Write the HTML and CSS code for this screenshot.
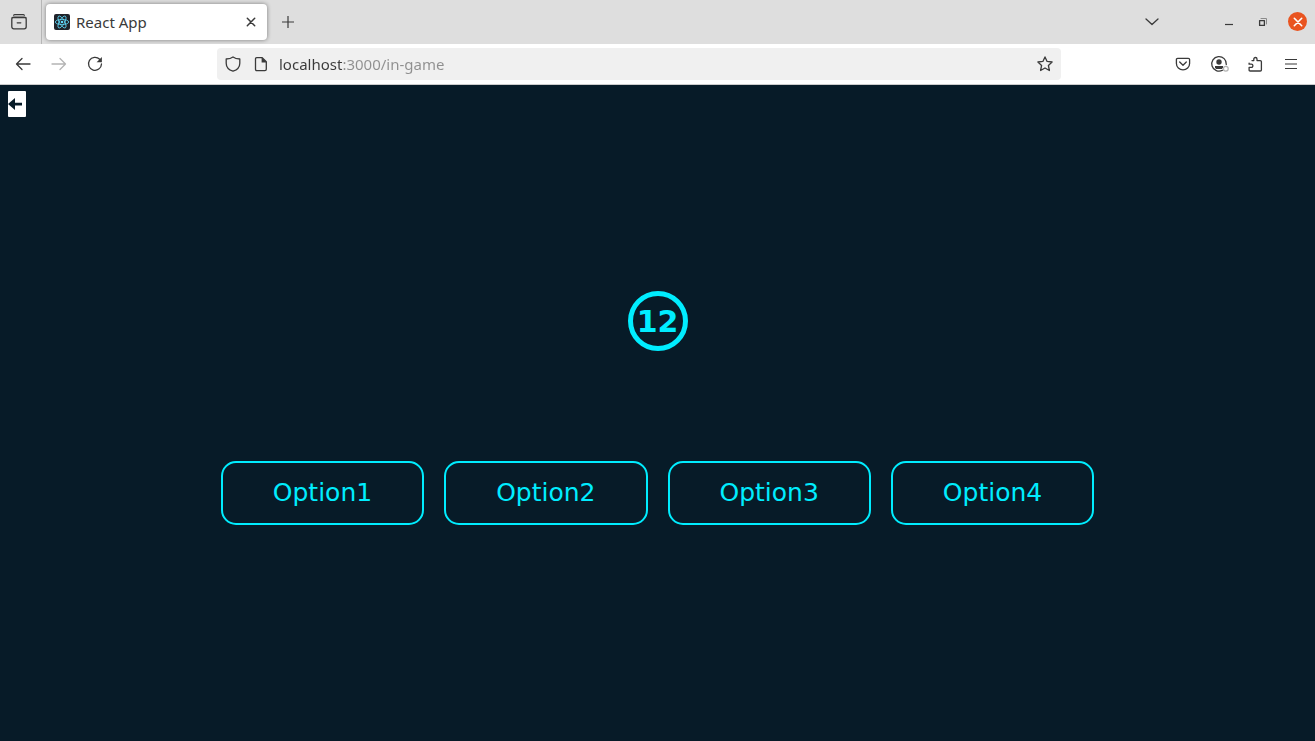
FILE: index.html
```html
<!DOCTYPE html>
<html lang="en">
<head>
<meta charset="utf-8">
<meta name="viewport" content="width=device-width, initial-scale=1">
<title>React App</title>
<link rel="stylesheet" href="styles.css">
</head>
<body>
<header class="tabbar">
  <button class="view-button" aria-label="View recent browsing">
    <svg class="icon" viewBox="0 0 16 16"><path d="M2.7 1.2Q3 .6 3.8.6h8.4q.8 0 1.1.6"/><rect x=".8" y="3.2" width="14.4" height="11.6" rx="2"/><path d="M1.2 3.7h13.6M6.2 8.8h3.6"/></svg>
  </button>
  <div class="tab">
    <svg class="favicon" viewBox="0 0 16 16"><rect width="16" height="16" rx="2" fill="#20232a"/><g fill="none" stroke="#61dafb" stroke-width=".8"><ellipse cx="8" cy="8" rx="6.7" ry="2.6"/><ellipse cx="8" cy="8" rx="6.7" ry="2.6" transform="rotate(60 8 8)"/><ellipse cx="8" cy="8" rx="6.7" ry="2.6" transform="rotate(120 8 8)"/></g><circle cx="8" cy="8" r="1.3" fill="#61dafb"/></svg>
    <span class="tab-title">React App</span>
    <button class="tab-close" aria-label="Close tab"><svg class="icon" viewBox="0 0 16 16"><path d="M4.3 4.3l7.4 7.4M11.7 4.3l-7.4 7.4"/></svg></button>
  </div>
  <button class="new-tab" aria-label="New tab"><svg class="icon" viewBox="0 0 16 16"><path class="thin" d="M8 2v12M2 8h12"/></svg></button>
  <button class="list-tabs" aria-label="List all tabs"><svg class="icon" viewBox="0 0 16 16"><path d="M2 5l6 5.600 6-5.600"/></svg></button>
  <div class="window-controls">
    <button aria-label="Minimize"><svg class="icon" viewBox="0 0 16 16"><path class="thin" d="M4 10.500h8"/></svg></button>
    <button aria-label="Restore"><svg class="icon" viewBox="0 0 16 16"><path class="faint" d="M6 4.500h5.500V10"/><path d="M4.600 6.600h4.800v4.800H4.600z"/></svg></button>
    <button class="window-close" aria-label="Close window"><svg class="icon" viewBox="0 0 16 16"><path d="M4.300 4.300l7.400 7.400M11.700 4.300l-7.400 7.400"/></svg></button>
  </div>
</header>

<nav class="toolbar" aria-label="Navigation">
  <div class="tools">
    <button aria-label="Back"><svg class="icon" viewBox="0 0 16 16"><path d="M15 8H1.500M7 2.500L1.500 8 7 13.500"/></svg></button>
    <button aria-label="Forward" disabled><svg class="icon" viewBox="0 0 16 16"><path d="M1 8h13.500M9 2.500L14.500 8 9 13.500"/></svg></button>
    <button aria-label="Reload"><svg class="icon" viewBox="0 0 16 16"><path d="M12.700 3.300A6.500 6.500 0 1 0 14.500 8"/><path class="solid" d="M14.900 1v5.300H9.600z"/></svg></button>
  </div>
  <div class="urlbar">
    <svg class="icon" viewBox="0 0 16 16"><path d="M8 .9C6 2.400 3.600 2.900 1.200 3v4.200c0 3.500 2.600 6.600 6.800 8 4.200-1.400 6.800-4.500 6.800-8V3C12.400 2.900 10 2.400 8 .9z"/></svg>
    <svg class="icon" viewBox="0 0 16 16"><path d="M3.800 1.700h5.400l4.100 4.100v7.400q0 1.400-1.400 1.400H3.800q-1.300 0-1.300-1.400V3q0-1.300 1.300-1.300z"/><path class="solid" d="M8.600 1.200l5.300 5.300H8.600z"/></svg>
    <input class="address" type="text" value="localhost:3000/in-game" aria-label="Address" spellcheck="false">
    <button aria-label="Bookmark this page"><svg class="icon" viewBox="0 0 16 16"><path d="M8 .9l2.100 4.500 5 .6-3.700 3.500 1 5L8 12l-4.400 2.500 1-5L.9 6l5-.6z"/></svg></button>
  </div>
  <div class="tools">
    <button aria-label="Save to Pocket"><svg class="icon" viewBox="0 0 16 16"><path d="M2.700 2.300h10.600q1.300 0 1.300 1.300v3.800a6.600 6.400 0 0 1-13.200 0V3.600q0-1.300 1.300-1.300z"/><path d="M4.700 6L8 9.200 11.300 6"/></svg></button>
    <button aria-label="Account"><svg class="icon account-icon" viewBox="0 0 20 16"><path d="M15.300 8.500A7.300 7.300 0 1 0 11.500 14.300"/><circle class="solid" cx="8" cy="6" r="2.700"/><path class="solid" d="M4 10h8v1.500l-1 1.500H5l-1-1.500z"/><circle class="status" cx="14.800" cy="12.800" r="2.400"/></svg></button>
    <button aria-label="Extensions"><svg class="icon" viewBox="0 0 16 16"><path d="M5 4.600h1.800V3.100a1.600 1.600 0 0 1 3.200 0v1.500h3.300q1.100 0 1.100 1.100v8.200q0 1.100-1.100 1.100H3.200q-1.100 0-1.100-1.100v-2.500h2.200a1.600 1.600 0 0 0 0-3.200H2.100V7.100"/></svg></button>
    <button aria-label="Open application menu"><svg class="icon" viewBox="0 0 16 16"><path class="thin" d="M2 3.500h12M2 8h12M2 12.500h12"/></svg></button>
  </div>
</nav>

<main class="game">
  <div class="game-header">
    <button class="leave" aria-label="Leave game"><svg class="arrow" viewBox="0 0 18 25"><path d="M0 12.500l7-6v4.800h7v2.800H7v4.400z"/></svg></button>
  </div>
  <div class="board">
    <div class="timer" role="timer">12</div>
    <div class="options">
      <button class="option">Option1</button>
      <button class="option">Option2</button>
      <button class="option">Option3</button>
      <button class="option">Option4</button>
    </div>
  </div>
</main>
</body>
</html>
```
FILE: styles.css
```css
* {
  box-sizing: border-box;
}

body {
  margin: 0;
  min-height: 100vh;
  display: flex;
  flex-direction: column;
  font-family: "Noto Sans", "Open Sans", sans-serif;
  font-size: 15px;
  color: #3a3a3a;
}

button {
  display: flex;
  align-items: center;
  justify-content: center;
  margin: 0;
  padding: 0;
  border: 0;
  background: none;
  color: inherit;
  font: inherit;
}

.icon {
  display: block;
  flex: none;
  width: 16px;
  height: 16px;
  overflow: visible;
  fill: none;
  stroke: currentColor;
  stroke-width: 1.3;
  stroke-linejoin: round;
  stroke-linecap: round;
}

.icon .thin {
  stroke-width: 1.2;
  stroke-linecap: butt;
}

.icon .solid {
  fill: currentColor;
  stroke: none;
}

.icon .faint {
  stroke: #8b8b8b;
  stroke-width: 1;
}

.icon .status {
  fill: #fff;
  stroke: #b5b5b5;
}

.tabbar {
  display: flex;
  align-items: center;
  height: 44px;
  background: #dedede;
}

.view-button {
  width: 42px;
  height: 44px;
  padding-right: 4px;
  border-right: 1px solid #b6b6b6;
}

.tab {
  display: flex;
  align-items: center;
  gap: 6px;
  width: 221px;
  height: 36px;
  margin-left: 4px;
  padding: 0 8px;
  border-radius: 4px;
  background: #fff;
  box-shadow: 0 0 4px rgba(0, 0, 0, 0.45);
}

.favicon {
  width: 16px;
  height: 16px;
}

.tab-title {
  flex: 1;
}

.tab-close .icon {
  stroke-width: 1.5;
}

.new-tab {
  width: 42px;
  height: 36px;
}

.list-tabs {
  width: 36px;
  height: 36px;
  margin-left: auto;
}

.window-controls {
  display: flex;
  margin-left: 42px;
}

.window-controls button {
  width: 34px;
  height: 36px;
}

.window-controls .window-close {
  width: 19px;
  height: 19px;
  margin: 8px;
  border-radius: 50%;
  background: #e95420;
  color: #fff;
}

.window-close .icon {
  stroke-width: 1.6;
}

.toolbar {
  display: flex;
  align-items: center;
  justify-content: space-between;
  height: 41px;
  padding: 0 6px 0 5px;
  border-bottom: 1px solid #ccc;
  background: #fff;
}

.tools {
  display: flex;
}

.tools button {
  width: 36px;
  height: 32px;
}

.tools button:disabled {
  color: #b4b4b4;
}

.account-icon {
  width: 20px;
  margin-left: 4px;
}

.urlbar {
  display: flex;
  align-items: center;
  gap: 12px;
  flex: 1;
  height: 32px;
  margin: 0 104px;
  padding: 0 8px;
  border-radius: 4px;
  background: #f0f0f0;
}

.address {
  flex: 1;
  min-width: 0;
  margin-left: -2px;
  padding: 0;
  border: 0;
  outline: 0;
  background: linear-gradient(to right, #3a3a3a 64px, #8f8f8f 64px);
  background-clip: text;
  -webkit-background-clip: text;
  color: transparent;
  caret-color: #3a3a3a;
  font: inherit;
}

.game {
  flex: 1;
  display: flex;
  flex-direction: column;
  background: #071b28;
  color: #00edff;
  font-family: "DejaVu Sans", sans-serif;
}

.game-header {
  padding: 6px 8px;
}

.leave {
  border-radius: 1px;
  background: #fff;
}

.arrow {
  display: block;
  width: 18px;
  height: 26px;
  fill: #071b28;
}

.board {
  flex: 1;
  display: flex;
  flex-direction: column;
  align-items: center;
  justify-content: center;
  gap: 110px;
  padding-bottom: 48px;
}

.timer {
  display: flex;
  align-items: center;
  justify-content: center;
  width: 60px;
  height: 60px;
  border: 5px solid #00edff;
  border-radius: 50%;
  font-size: 30px;
  font-weight: bold;
}

.options {
  display: flex;
  flex-wrap: wrap;
  justify-content: center;
  gap: 20px;
}

.option {
  padding: 15px 50px;
  border: 2px solid #00edff;
  border-radius: 15px;
  font-size: 25px;
  line-height: 30px;
}
```
